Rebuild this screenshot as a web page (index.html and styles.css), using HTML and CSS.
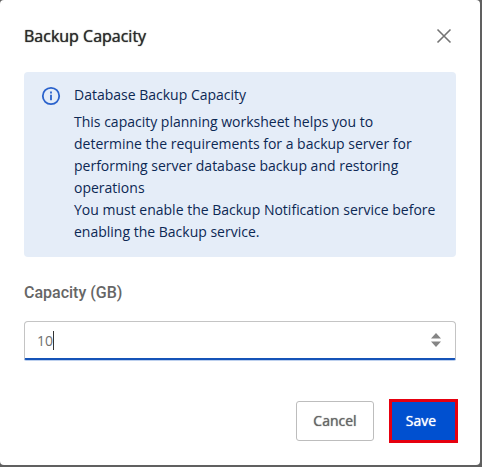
FILE: index.html
```html
<!DOCTYPE html>
<html lang="en">
<head>
<meta charset="utf-8">
<meta name="viewport" content="width=device-width, initial-scale=1">
<title>Backup Capacity</title>
<link rel="stylesheet" href="styles.css">
</head>
<body>
<form class="dialog" role="dialog" aria-labelledby="dialog-title">
  <header class="dialog-header">
    <h1 class="dialog-title" id="dialog-title">Backup Capacity</h1>
    <button class="close" type="button" aria-label="Close">
      <svg width="16" height="16" viewBox="0 0 16 16" aria-hidden="true"><path d="M1.5 1.5l13 13M14.5 1.500l-13 13" fill="none" stroke="#747474" stroke-width="1.6"/></svg>
    </button>
  </header>
  <section class="notice">
    <svg class="notice-icon" width="20" height="20" viewBox="0 0 20 20" aria-hidden="true">
      <circle cx="10" cy="10" r="8.2" fill="none" stroke="#2a62cc" stroke-width="1.8"/>
      <path d="M10 8.8v5.4M10 5.6v1.8" fill="none" stroke="#2a62cc" stroke-width="1.8"/>
    </svg>
    <div>
      <h2 class="notice-title">Database Backup Capacity</h2>
      <p class="notice-text">This capacity planning worksheet helps you to determine the requirements for a backup server for performing server database backup and restoring operations</p>
      <p class="notice-text">You must enable the Backup Notification service before enabling the Backup service.</p>
    </div>
  </section>
  <label class="label" for="capacity">Capacity (GB)</label>
  <div class="field">
    <input class="input" id="capacity" type="number" value="10" min="0">
    <span class="caret" aria-hidden="true"></span>
    <svg class="stepper" width="10" height="16" viewBox="0 0 10 16" aria-hidden="true"><path d="M5 1l5 5.500H0zM5 15l5-5.500H0z" fill="#858585"/></svg>
  </div>
  <footer class="actions">
    <button class="button" type="button">Cancel</button>
    <button class="button button-primary" type="submit">Save</button>
  </footer>
</form>
</body>
</html>
```
FILE: styles.css
```css
* {
  box-sizing: border-box;
}

body {
  margin: 0;
  padding: 0 2px 2px 0;
  min-height: 100vh;
  display: flex;
  background: #606060;
  font-family: "Open Sans", "Noto Sans", sans-serif;
  font-size: 14px;
  line-height: 22px;
}

.dialog {
  flex: 1;
  padding: 24px;
  border-radius: 4px;
  background: #fff;
}

.dialog-header {
  display: flex;
  align-items: center;
  justify-content: space-between;
  margin-bottom: 24px;
  padding-right: 4px;
}

.dialog-title {
  margin: 0;
  font-size: 16px;
  font-weight: 400;
  line-height: 24px;
  color: #2b2b2b;
  text-shadow: 0 0 1px currentColor;
}

.close {
  display: flex;
  padding: 0;
  border: 0;
  background: none;
}

.notice {
  display: flex;
  gap: 13px;
  padding: 12px 16px 14px;
  border-radius: 4px;
  background: #e5edf8;
  color: #0c2854;
}

.notice-icon {
  flex: none;
  margin: 2px 0 0 1px;
}

.notice-title {
  margin: 0 0 5px;
  font-size: 14px;
  font-weight: 400;
}

.notice-text {
  margin: 0;
}

.label {
  display: block;
  margin: 24px 0 16px;
  font-family: Roboto, sans-serif;
  font-size: 16px;
  font-weight: 500;
  line-height: 24px;
  color: #666;
}

.field {
  position: relative;
}

.input {
  display: block;
  width: 100%;
  height: 39px;
  padding: 1px 12px 0;
  border: 1px solid #c4c4c4;
  border-bottom: 2px solid #1553b8;
  border-radius: 4px 4px 2px 2px;
  box-shadow: 0 1px 0 #bdd0ee;
  outline: 0;
  font: inherit;
  color: #707070;
  appearance: textfield;
}

.input::-webkit-inner-spin-button {
  appearance: none;
}

.caret {
  position: absolute;
  top: 10px;
  left: 29px;
  width: 1px;
  height: 19px;
  background: #333;
}

.stepper {
  position: absolute;
  top: 11px;
  right: 15px;
}

.actions {
  display: flex;
  justify-content: flex-end;
  gap: 17px;
  margin-top: 41px;
}

.button {
  min-width: 78px;
  height: 40px;
  padding: 0;
  border: 1px solid #bdbdbd;
  border-radius: 3px;
  background: #fff;
  font: inherit;
  color: #666;
  text-shadow: 0 0 1px currentColor;
}

.button-primary {
  min-width: 65px;
  padding-right: 5px;
  border-color: #0050d0;
  border-radius: 0;
  background: #0050d0;
  color: #fff;
  outline: 3px solid #e6000f;
  outline-offset: -1px;
}
```
